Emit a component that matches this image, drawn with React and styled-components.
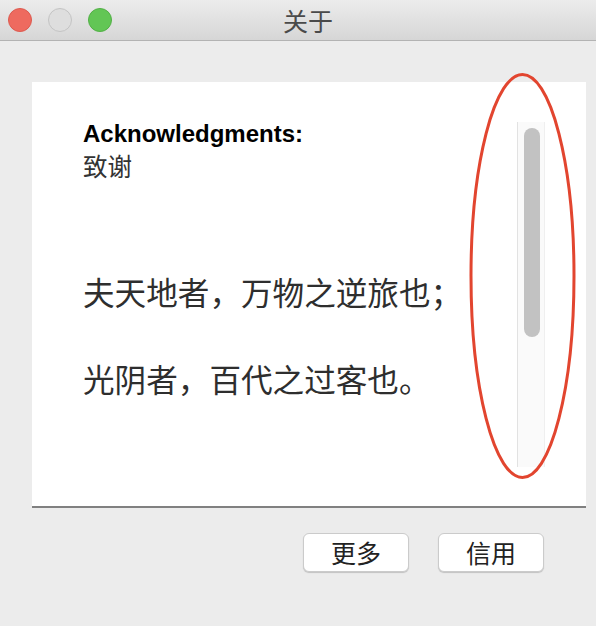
import styled, { createGlobalStyle } from 'styled-components';

const GlobalStyle = createGlobalStyle`
    html, body {
        margin: 0;
        padding: 0;
        background: #ececec;
    }
    * {
        box-sizing: border-box;
    }
`

const cjk = `"Noto Sans CJK SC", "Liberation Sans", sans-serif`

const Window = styled.div`
    position: relative;
    width: 596px;
    height: 626px;
    overflow: hidden;
    display: flex;
    flex-direction: column;
    background: #ececec;
`
const TitleBar = styled.div`
    height: 41px;
    display: flex;
    align-items: center;
    padding: 0 0 1px 8px;
    background: linear-gradient(180deg, #ececec 0%, #d6d6d6 100%);
    border-bottom: 1px solid #b3b3b3;
`
const Lights = styled.div`
    display: flex;
    gap: 16px;
`
const Light = styled.span`
    width: 24px;
    height: 24px;
    border-radius: 50%;
    background: ${p => p.color};
    border: 1px solid ${p => p.edge};
`
const Title = styled.div`
    margin-left: 171px;
    font-family: ${cjk};
    font-size: 25px;
    line-height: 30px;
    color: #4a4a4a;
`
const Content = styled.div`
    padding: 41px 10px 0 32px;
`
const Panel = styled.div`
    height: 426px;
    display: flex;
    padding: 40px 41px 0 51px;
    background: #fff;
    border-bottom: 2px solid #808080;
`
const TextColumn = styled.div`
    flex: 1;
`
const Heading = styled.div`
    margin-top: -1px;
    font-family: "Liberation Sans", Arial, sans-serif;
    font-weight: 700;
    font-size: 24px;
    line-height: 26px;
    color: #000;
`
const Sub = styled.div`
    margin-top: 5px;
    font-family: ${cjk};
    font-size: 24.5px;
    line-height: 28px;
    color: #333;
`
const Verse = styled.p`
    margin: ${p => p.gap}px 0 0;
    font-family: ${cjk};
    font-size: 31.6px;
    line-height: 40px;
    color: #2e2e2e;
`
const Track = styled.div`
    width: 28px;
    height: 345px;
    padding: 6px 0 0 6px;
    background: #fafafa;
    border-left: 1px solid #e2e2e2;
    border-right: 1px solid #efefef;
`
const Thumb = styled.div`
    width: 16px;
    height: 209px;
    border-radius: 8px;
    background: #c2c2c2;
`
const Footer = styled.div`
    display: flex;
    justify-content: flex-end;
    gap: 29px;
    padding: 25px 52px 0 0;
`
const Button = styled.button`
    width: 106px;
    height: 39px;
    padding: 0;
    border: 1px solid #cbcbcb;
    border-radius: 6px;
    background: #fff;
    box-shadow: 0 1px 1px rgba(0, 0, 0, 0.18);
    font-family: ${cjk};
    font-size: 25px;
    line-height: 37px;
    color: #222;
`
const Mark = styled.svg`
    position: absolute;
    left: 0;
    top: 0;
    pointer-events: none;
`

function App() {
    return (
        <>
            <GlobalStyle />
            <Window>
                <TitleBar>
                    <Lights>
                        <Light color="#ee6a5f" edge="#dd5a4f" />
                        <Light color="#dedede" edge="#c4c4c4" />
                        <Light color="#62c655" edge="#52b046" />
                    </Lights>
                    <Title>关于</Title>
                </TitleBar>
                <Content>
                    <Panel>
                        <TextColumn>
                            <Heading>Acknowledgments:</Heading>
                            <Sub>致谢</Sub>
                            <Verse gap={91}>夫天地者，万物之逆旅也；</Verse>
                            <Verse gap={47}>光阴者，百代之过客也。</Verse>
                        </TextColumn>
                        <Track>
                            <Thumb />
                        </Track>
                    </Panel>
                </Content>
                <Footer>
                    <Button>更多</Button>
                    <Button>信用</Button>
                </Footer>
                <Mark width="596" height="626">
                    <ellipse cx="522.5" cy="276" rx="51.5" ry="201.5" fill="none" stroke="#e2452f" strokeWidth="3" />
                </Mark>
            </Window>
        </>
    )
}

export default App
